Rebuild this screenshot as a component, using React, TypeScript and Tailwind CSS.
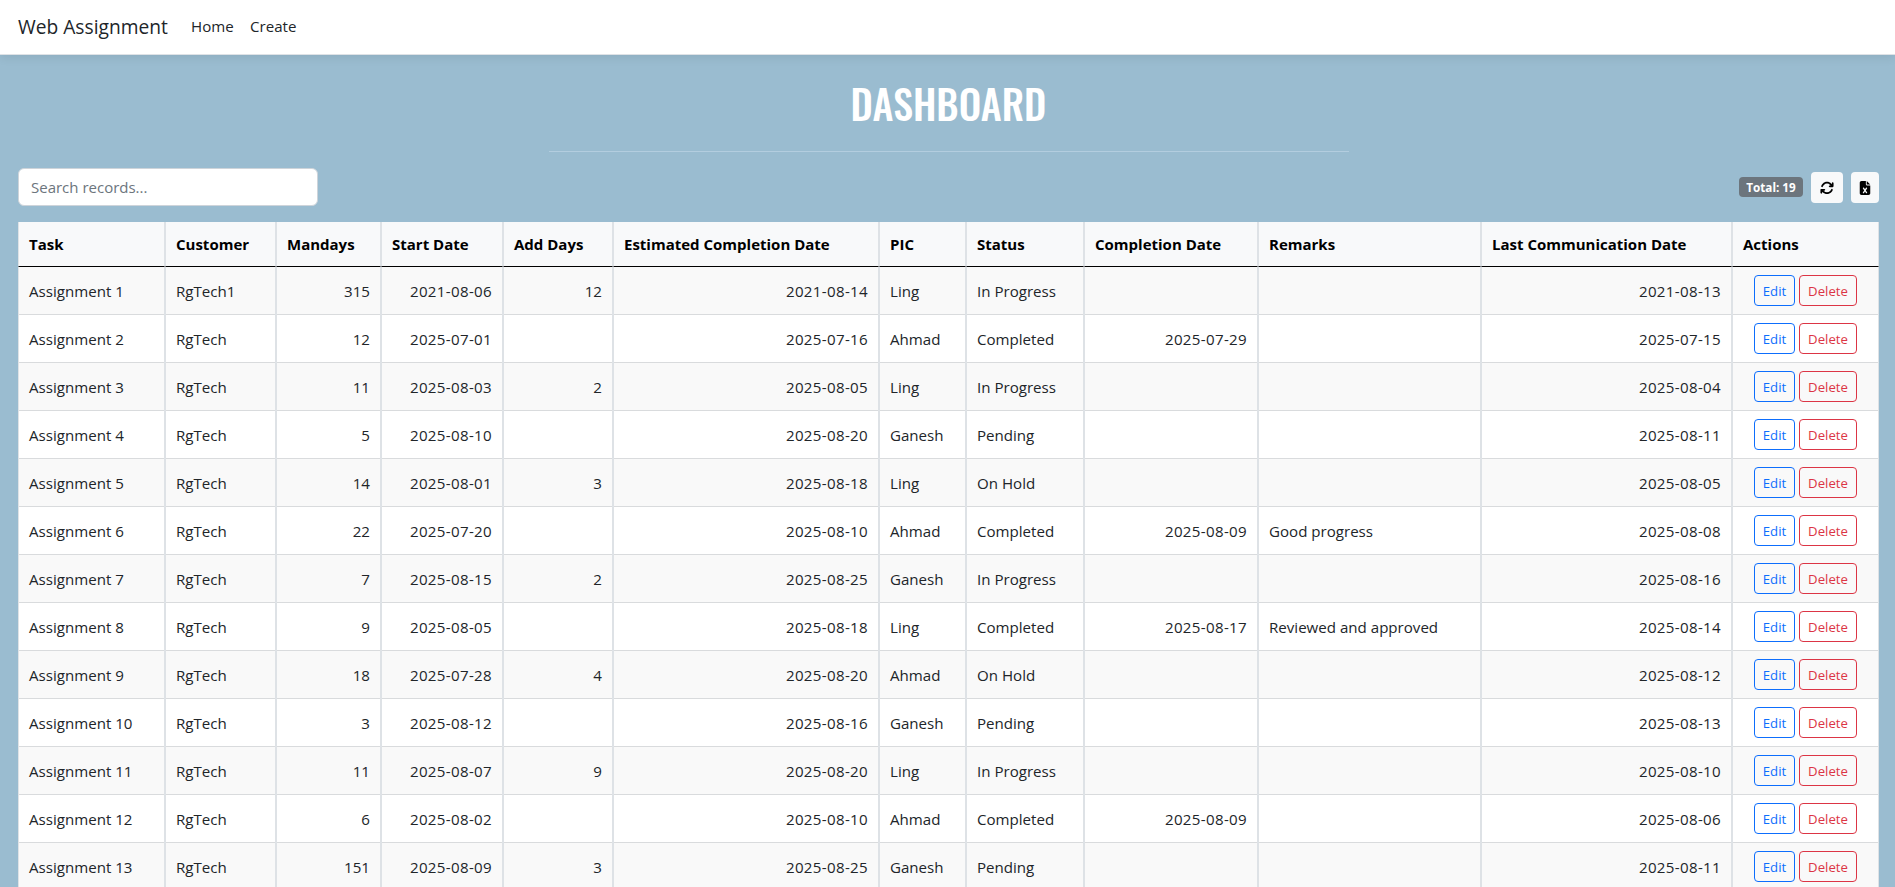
import { FaArrowsRotate, FaFileExcel } from "react-icons/fa6";

type Row = [string, string, string, string, string, string, string, string, string, string];

const columns: { label: string; width: string; align: string }[] = [
  { label: "Task", width: "w-[147px]", align: "text-left" },
  { label: "Customer", width: "w-[111px]", align: "text-left" },
  { label: "Mandays", width: "w-[105px]", align: "text-right" },
  { label: "Start Date", width: "w-[122px]", align: "text-right tracking-[0.33px]" },
  { label: "Add Days", width: "w-[110px]", align: "text-right" },
  { label: "Estimated Completion Date", width: "w-[266px]", align: "text-right tracking-[0.33px]" },
  { label: "PIC", width: "w-[87px]", align: "text-left" },
  { label: "Status", width: "w-[118px]", align: "text-left" },
  { label: "Completion Date", width: "w-[174px]", align: "text-right tracking-[0.33px]" },
  { label: "Remarks", width: "w-[223px]", align: "text-left" },
  { label: "Last Communication Date", width: "w-[251px]", align: "text-right tracking-[0.33px]" },
  { label: "Actions", width: "w-[147px]", align: "text-center" },
];

const data: Row[] = [
  ["RgTech1", "315", "2021-08-06", "12", "2021-08-14", "Ling", "In Progress", "", "", "2021-08-13"],
  ["RgTech", "12", "2025-07-01", "", "2025-07-16", "Ahmad", "Completed", "2025-07-29", "", "2025-07-15"],
  ["RgTech", "11", "2025-08-03", "2", "2025-08-05", "Ling", "In Progress", "", "", "2025-08-04"],
  ["RgTech", "5", "2025-08-10", "", "2025-08-20", "Ganesh", "Pending", "", "", "2025-08-11"],
  ["RgTech", "14", "2025-08-01", "3", "2025-08-18", "Ling", "On Hold", "", "", "2025-08-05"],
  ["RgTech", "22", "2025-07-20", "", "2025-08-10", "Ahmad", "Completed", "2025-08-09", "Good progress", "2025-08-08"],
  ["RgTech", "7", "2025-08-15", "2", "2025-08-25", "Ganesh", "In Progress", "", "", "2025-08-16"],
  ["RgTech", "9", "2025-08-05", "", "2025-08-18", "Ling", "Completed", "2025-08-17", "Reviewed and approved", "2025-08-14"],
  ["RgTech", "18", "2025-07-28", "4", "2025-08-20", "Ahmad", "On Hold", "", "", "2025-08-12"],
  ["RgTech", "3", "2025-08-12", "", "2025-08-16", "Ganesh", "Pending", "", "", "2025-08-13"],
  ["RgTech", "11", "2025-08-07", "9", "2025-08-20", "Ling", "In Progress", "", "", "2025-08-10"],
  ["RgTech", "6", "2025-08-02", "", "2025-08-10", "Ahmad", "Completed", "2025-08-09", "", "2025-08-06"],
  ["RgTech", "151", "2025-08-09", "3", "2025-08-25", "Ganesh", "Pending", "", "", "2025-08-11"],
];

function Navbar() {
  return (
    <nav className="relative flex h-[55px] shrink-0 items-center border-b border-[#dee2e6] bg-white pl-[18px] shadow-[0_2px_10px_rgba(0,0,0,0.09)]">
      <a className="w-[173px] text-[19.2px]">Web Assignment</a>
      <a className="w-[59px] pb-0.5 text-[15.1px]">Home</a>
      <a className="pb-0.5 text-[15.1px]">Create</a>
    </nav>
  );
}

function Toolbar() {
  return (
    <div className="flex h-[38px] items-center justify-between">
      <input
        className="h-[38px] w-[300px] rounded-md border border-[#ced4da] bg-white px-3 text-[15px] outline-none placeholder:text-[#6c757d]"
        placeholder="Search records..."
      />
      <div className="flex items-center gap-2 pt-px">
        <span className="mb-px flex h-5 w-16 items-center justify-center rounded bg-[#6c757d] pt-px text-[11.7px] font-bold text-white">
          Total: 19
        </span>
        <button className="flex h-[31px] w-8 items-center justify-center rounded bg-[#f8f9fa] text-sm text-black">
          <FaArrowsRotate />
        </button>
        <button className="flex h-[31px] w-7 items-center justify-center rounded bg-[#f8f9fa] text-sm text-black">
          <FaFileExcel />
        </button>
      </div>
    </div>
  );
}

export default function App() {
  return (
    <div className="flex h-[887px] flex-col overflow-hidden bg-[#9abcd0] font-['Open_Sans','Noto_Sans',sans-serif] text-[15px] text-[#212529]">
      <Navbar />
      <main className="pr-4 pl-[18px]">
        <h1 className="flex h-24 items-center justify-center font-['Oswald','Roboto_Condensed',sans-serif] text-[40px] leading-none font-medium text-white">
          DASHBOARD
        </h1>
        <hr className="mx-auto mb-4 w-[800px] border-t border-[#b3cddf]" />
        <Toolbar />
        <table className="mt-4 w-[1861px] table-fixed border-separate border-spacing-0 whitespace-nowrap">
          <colgroup>
            {columns.map((c) => (
              <col key={c.label} className={c.width} />
            ))}
          </colgroup>
          <thead>
            <tr className="h-[45px] bg-[#f8f9fa]">
              {columns.map((c) => (
                <th
                  key={c.label}
                  className="border-x border-b border-x-[#dee2e6] border-b-black px-2.5 text-left text-[15px] font-bold text-black"
                >
                  {c.label}
                </th>
              ))}
            </tr>
          </thead>
          <tbody>
            {data.map((row, i) => (
              <tr key={i} className="h-12 bg-white odd:bg-[#f9f9f9]">
                {[`Assignment ${i + 1}`, ...row].map((value, j) => (
                  <td
                    key={j}
                    className={`border-x border-[#dee2e6] px-2.5 pt-px text-[15.1px] shadow-[inset_0_-1px_#d9dbdd] ${columns[j].align}`}
                  >
                    {value}
                  </td>
                ))}
                <td className="border-x border-[#dee2e6] pb-px shadow-[inset_0_-1px_#d9dbdd]">
                  <div className="flex justify-center gap-1 text-[13.2px]">
                    <button className="h-[31px] w-[41px] rounded border border-[#0d6efd] pt-0.5 text-[#0d6efd]">Edit</button>
                    <button className="h-[31px] w-[58px] rounded border border-[#dc3545] pt-0.5 text-[#dc3545]">Delete</button>
                  </div>
                </td>
              </tr>
            ))}
          </tbody>
        </table>
      </main>
    </div>
  );
}
